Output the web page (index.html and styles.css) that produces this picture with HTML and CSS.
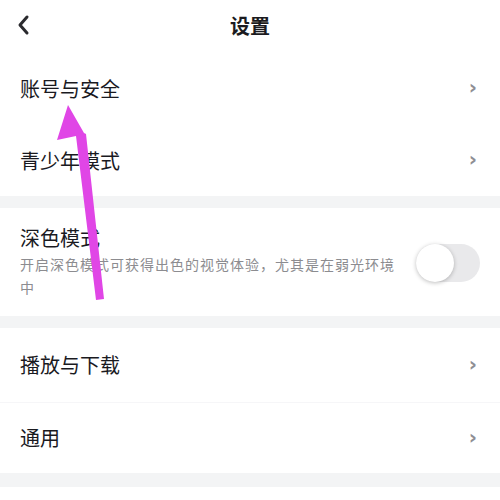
FILE: index.html
```html
<!DOCTYPE html>
<html lang="zh-CN">
<head>
<meta charset="utf-8">
<link rel="stylesheet" href="styles.css">
</head>
<body>
<div class="page">
  <header class="topbar">
    <svg class="back" width="14" height="22" viewBox="0 0 14 22"><path d="M11 3 L4 11 L11 19" fill="none" stroke="#2a2a2e" stroke-width="3" stroke-linecap="round" stroke-linejoin="round"/></svg>
    <h1 class="title">设置</h1>
  </header>
  <section class="group">
    <div class="row row-first"><span class="label">账号与安全</span><span class="chev">›</span></div>
    <div class="row row-second"><span class="label">青少年模式</span><span class="chev">›</span></div>
  </section>
  <div class="gap"></div>
  <section class="group dark">
    <div class="dark-text">
      <div class="label">深色模式</div>
      <div class="desc">开启深色模式可获得出色的视觉体验，尤其是在弱光环境中</div>
    </div>
    <div class="toggle"><div class="knob"></div></div>
  </section>
  <div class="gap"></div>
  <section class="group">
    <div class="row row-play"><span class="label">播放与下载</span><span class="chev">›</span></div>
    <div class="row row-general"><span class="label">通用</span><span class="chev">›</span></div>
  </section>
  <div class="gap gap-last"></div>
  <svg class="arrow" width="500" height="500" viewBox="0 0 500 500">
    <polygon points="68,105 57,140 76,136 96,300 104,299 86,134 84,133" fill="#e046e6"/>
  </svg>
</div>
</body>
</html>
```
FILE: styles.css
```css
* { box-sizing: border-box; }
html, body { margin: 0; padding: 0; background: #fff; }
body {
  font-family: "Noto Sans CJK SC", "Noto Sans", sans-serif;
  color: #1a1a1f;
  width: 500px;
  height: 500px;
  overflow: hidden;
}
.page { position: relative; width: 500px; height: 500px; }
.topbar {
  height: 52px;
  display: flex;
  align-items: center;
  justify-content: center;
  position: relative;
}
.back { position: absolute; left: 16px; top: 14px; }
.title {
  margin: 0;
  font-size: 20px;
  font-weight: 700;
  line-height: 1;
  color: #1b1b20;
}
.group { background: #fff; }
.row {
  display: flex;
  align-items: center;
  justify-content: space-between;
  padding: 0 23px 0 20px;
}
.row-first { height: 73px; }
.row-second { height: 71px; }
.row-play { height: 75px; border-bottom: 1px solid #f6f6f8; }
.row-general { height: 70px; }
.label { font-size: 20px; line-height: 1; }
.chev {
  font-family: "DejaVu Sans", sans-serif;
  font-size: 20px;
  font-weight: 700;
  color: #8e8e94;
  line-height: 1;
  margin-top: -3px;
}
.gap { height: 12px; background: #f3f4f5; }
.gap-last { height: 14px; }
.dark {
  height: 108px;
  display: flex;
  align-items: flex-start;
  justify-content: space-between;
  padding: 20px 20px 0 20px;
}
.dark-text { width: 385px; flex: none; }
.dark .label { display: block; }
.desc {
  font-size: 14px;
  color: #8c8c90;
  line-height: 23px;
  margin-top: 5px;
  letter-spacing: 1px;
}
.toggle {
  margin-top: 16px;
  width: 64px;
  height: 38px;
  border-radius: 19px;
  background: #e9e9eb;
  position: relative;
}
.knob {
  position: absolute;
  left: 0;
  top: 0;
  width: 38px;
  height: 38px;
  border-radius: 50%;
  background: #fff;
  box-shadow: 0 1px 4px rgba(0,0,0,0.25);
}
.arrow { position: absolute; left: 0; top: 0; pointer-events: none; }
```
